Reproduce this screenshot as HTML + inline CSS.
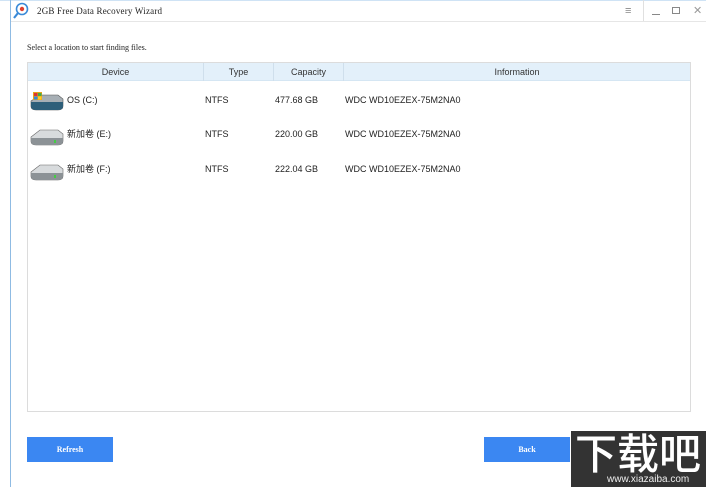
<!DOCTYPE html>
<html><head><meta charset="utf-8"><style>
*{margin:0;padding:0;box-sizing:border-box}
body{width:706px;height:487px;background:#fff;position:relative;overflow:hidden;font-family:"Liberation Sans","Noto Sans CJK SC",sans-serif;font-size:9px;color:#222}
.a{position:absolute}
.serif{font-family:"Liberation Serif","Noto Serif CJK SC",serif}
.hdr{top:63px;height:18px;background:#e3f0fa;border-bottom:1px solid #d5e6f3}
.col{top:63px;height:18px;line-height:18px;text-align:center;color:#333;border-left:1px solid #cfdfec}
.cell{line-height:12px}
</style></head><body>
<div class="a" style="left:0;top:0;width:706px;height:1px;background:#cfe3f5"></div>
<div class="a" style="left:10px;top:0;width:1px;height:487px;background:#8fbbe3"></div>
<div class="a" style="left:11px;top:21px;width:695px;height:1px;background:#e6e6e6"></div>
<svg class="a" style="left:12px;top:2px" width="18" height="18" viewBox="0 0 18 18"><circle cx="10" cy="7" r="5.5" fill="#fff" stroke="#3a8ad8" stroke-width="1.6"/><circle cx="10" cy="7" r="2.2" fill="#e04030"/><line x1="6" y1="11" x2="2" y2="16" stroke="#3a8ad8" stroke-width="2.2"/></svg>
<div class="a serif" style="left:37px;top:6px;font-size:9px;letter-spacing:0.2px">2GB Free Data Recovery Wizard</div>
<div class="a" style="left:643px;top:0;width:1px;height:21px;background:#e0e0e0"></div>
<div class="a" style="left:625px;top:5px;color:#888;font-size:11px">≡</div>
<div class="a" style="left:652px;top:14px;width:8px;height:1px;background:#888"></div>
<div class="a" style="left:672px;top:7px;width:8px;height:7px;border:1px solid #888"></div>
<div class="a" style="left:693px;top:4px;color:#999;font-size:11px">✕</div>
<div class="a serif" style="left:27px;top:43px;font-size:8px">Select a location to start finding files.</div>
<div class="a" style="left:27px;top:62px;width:664px;height:350px;border:1px solid #dcdcdc"></div>
<div class="a hdr" style="left:28px;width:662px"></div>
<div class="a col" style="left:28px;width:175px;border-left:none">Device</div>
<div class="a col" style="left:203px;width:70px">Type</div>
<div class="a col" style="left:273px;width:70px">Capacity</div>
<div class="a col" style="left:343px;width:347px">Information</div>

<svg class="a" style="left:29px;top:90px" width="36" height="22" viewBox="0 0 36 22"><path d="M2 11 L11 5 H29 L34 9 V16 Q34 20 29 20 H7 Q2 20 2 16 Z" fill="#a7afb5" stroke="#555" stroke-width=".6"/><path d="M2 12 H34 V16 Q34 20 29 20 H7 Q2 20 2 16Z" fill="#2e5f7a"/><rect x="4" y="2" width="9" height="8" fill="#e7a318"/><rect x="5" y="3" width="3.5" height="3" fill="#d33"/><rect x="9" y="3" width="3.5" height="3" fill="#4a4"/><rect x="5" y="6.5" width="3.5" height="3" fill="#38d"/><rect x="9" y="6.5" width="3.5" height="3" fill="#fc2"/></svg>
<div class="a cell" style="left:67px;top:94px">OS (C:)</div>
<div class="a cell" style="left:205px;top:94px">NTFS</div>
<div class="a cell" style="left:275px;top:94px">477.68 GB</div>
<div class="a cell" style="left:345px;top:94px">WDC WD10EZEX-75M2NA0</div>

<svg class="a" style="left:29px;top:125px" width="36" height="22" viewBox="0 0 36 22"><path d="M2 12 L11 5 H29 L34 9 V16 Q34 20 29 20 H7 Q2 20 2 16 Z" fill="#d8dbdd" stroke="#666" stroke-width=".6"/><path d="M2 13 H34 V16 Q34 20 29 20 H7 Q2 20 2 16Z" fill="#8c9296"/><rect x="25" y="15" width="2" height="3" fill="#4c4"/></svg>
<div class="a cell" style="left:67px;top:128px">新加卷 (E:)</div>
<div class="a cell" style="left:205px;top:128px">NTFS</div>
<div class="a cell" style="left:275px;top:128px">220.00 GB</div>
<div class="a cell" style="left:345px;top:128px">WDC WD10EZEX-75M2NA0</div>

<svg class="a" style="left:29px;top:160px" width="36" height="22" viewBox="0 0 36 22"><path d="M2 12 L11 5 H29 L34 9 V16 Q34 20 29 20 H7 Q2 20 2 16 Z" fill="#d8dbdd" stroke="#666" stroke-width=".6"/><path d="M2 13 H34 V16 Q34 20 29 20 H7 Q2 20 2 16Z" fill="#8c9296"/><rect x="25" y="15" width="2" height="3" fill="#4c4"/></svg>
<div class="a cell" style="left:67px;top:163px">新加卷 (F:)</div>
<div class="a cell" style="left:205px;top:163px">NTFS</div>
<div class="a cell" style="left:275px;top:163px">222.04 GB</div>
<div class="a cell" style="left:345px;top:163px">WDC WD10EZEX-75M2NA0</div>

<div class="a serif" style="left:27px;top:437px;width:86px;height:25px;background:#3b87f2;color:#fff;font-weight:bold;font-size:8px;line-height:25px;text-align:center">Refresh</div>
<div class="a serif" style="left:484px;top:437px;width:86px;height:25px;background:#3b87f2;color:#fff;font-weight:bold;font-size:8px;line-height:25px;text-align:center">Back</div>
<div class="a" style="left:571px;top:431px;width:135px;height:56px;background:#333"></div>
<div class="a" style="left:575px;top:428px;color:#fff;font-size:42px;font-weight:500;letter-spacing:0;line-height:48px;font-family:'Noto Sans CJK SC',sans-serif">下载吧</div>
<div class="a" style="left:607px;top:474px;color:#eee;font-size:10px;line-height:12px">www.xiazaiba.com</div>
</body></html>
